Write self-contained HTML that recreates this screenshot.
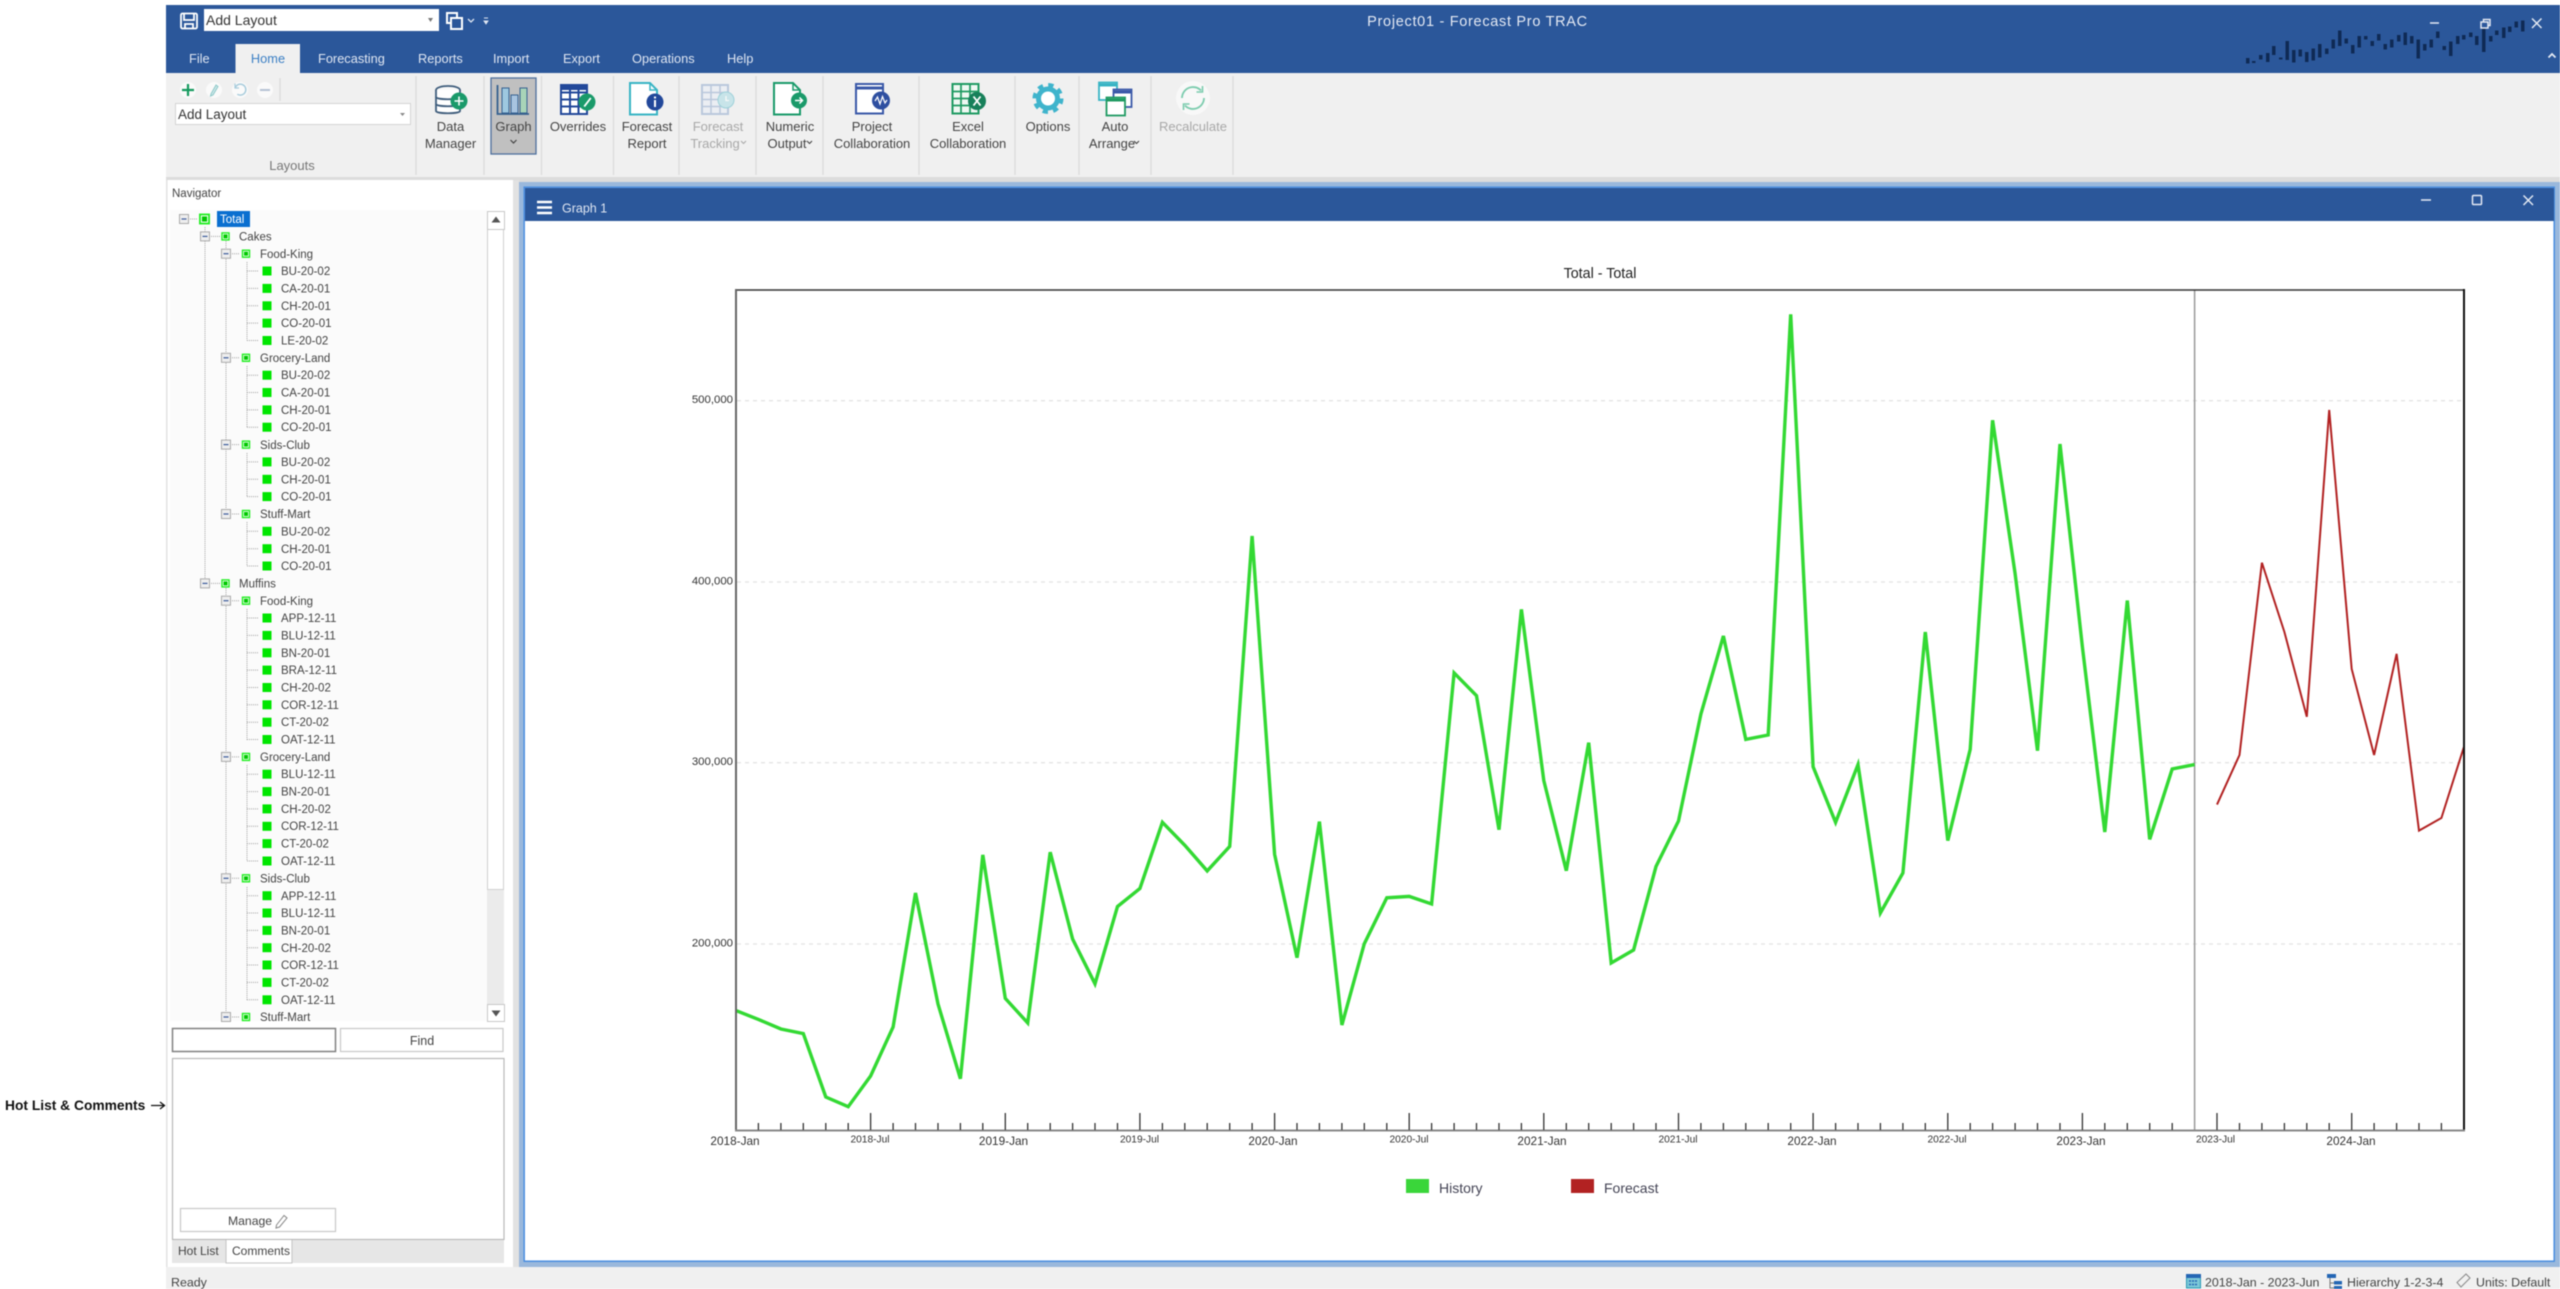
<!DOCTYPE html>
<html><head><meta charset="utf-8"><title>Project01 - Forecast Pro TRAC</title>
<style>
html,body{margin:0;padding:0;background:#fff;width:2560px;height:1289px;overflow:hidden}
svg{display:block;position:absolute;left:0;top:0;filter:blur(.4px)}
text{font-family:"Liberation Sans",sans-serif;fill:#444}
.t{font-size:11.5px;fill:#444}
.r{font-size:13px;fill:#444;text-anchor:middle}
.g{fill:#a8a8a8}
.tab{font-size:12.8px;fill:#dfe6f2}
.yl{font-size:11.4px;fill:#333;text-anchor:end}
.xl{font-size:11.8px;fill:#333;text-anchor:middle}
.xs{font-size:10.2px;fill:#333;text-anchor:middle}
.st{font-size:12.4px;fill:#444}
</style></head><body>
<svg width="2560" height="1289" viewBox="0 0 2560 1289" xmlns="http://www.w3.org/2000/svg">
<defs>
<g id="e"><rect x="-4.5" y="-4.5" width="9" height="9" fill="#eeeeee" stroke="#aaa"/><path d="M-2.5 0H2.5" stroke="#3a5a9a" stroke-width="1.2"/></g>
<g id="n"><rect x="-3.5" y="-3.5" width="7" height="7" fill="#fff" stroke="#22ee22" stroke-width="1.4"/><rect x="-2" y="-2" width="4" height="4" fill="#00c800"/></g>
<rect id="l" x="-4.5" y="-4.5" width="9" height="9" fill="#00e600"/>
</defs>

<!-- App frame -->
<rect x="166" y="5" width="2394" height="68" fill="#2b579a"/>
<rect x="166" y="73" width="2394" height="104" fill="#f0f0f0"/>
<rect x="166" y="177" width="2394" height="5" fill="#dcdcdc"/>
<rect x="166" y="180" width="347" height="1088" fill="#fff"/>
<rect x="166" y="180" width="1.5" height="1088" fill="#e2e2e2"/>
<rect x="513" y="180" width="6" height="1088" fill="#e2e2e2"/>
<rect x="519" y="182" width="2041" height="1085" fill="#9ab8dc"/>
<rect x="524.2" y="187.2" width="2030" height="1074" fill="#fff" stroke="#4a8ee0" stroke-width="1.5"/>
<rect x="525" y="188" width="2029" height="33" fill="#2b579a"/>
<rect x="166" y="1267" width="2394" height="22" fill="#f0f0f0"/>

<!-- Quick access -->
<g fill="none" stroke="#fff" stroke-width="1.8"><rect x="181" y="13.5" width="16" height="15" rx="1.5"/><path d="M184 14V20H194V14M185 28.5V24H193V28.5"/></g>
<rect x="204" y="9" width="235" height="22" fill="#fff"/>
<text x="206" y="25" font-size="14" style="fill:#333">Add Layout</text>
<path d="M428 18l5 0-2.500 4z" fill="#777"/>
<g fill="none" stroke="#fff" stroke-width="2"><rect x="447" y="13" width="10" height="10"/><rect x="451" y="18" width="11" height="11" fill="#2b579a"/></g>
<path d="M468 19l3 3 3-3" fill="none" stroke="#dfe6f2" stroke-width="1.3"/>
<path d="M484 18h4M484 21l2 3 2-3z" fill="#dfe6f2" stroke="#dfe6f2" stroke-width=".9"/>
<text x="1477.500" y="26" font-size="14.500" letter-spacing=".7" text-anchor="middle" style="fill:#e4e9f3">Project01 - Forecast Pro TRAC</text>

<!-- Tabs -->
<text x="189" y="63" class="tab">File</text>
<rect x="235.500" y="44" width="64.500" height="29" fill="#f0f0f0"/>
<text x="268" y="63" font-size="12.800" text-anchor="middle" style="fill:#3b7fc4">Home</text>
<text x="318" y="63" class="tab">Forecasting</text>
<text x="418" y="63" class="tab">Reports</text>
<text x="493" y="63" class="tab">Import</text>
<text x="563" y="63" class="tab">Export</text>
<text x="632" y="63" class="tab">Operations</text>
<text x="727" y="63" class="tab">Help</text>

<!-- Sparkline -->
<g fill="#0f2a55">
<rect x="2246" y="58" width="3.500" height="5.500"/><rect x="2252" y="61" width="3.500" height="2"/><rect x="2259" y="55" width="3.500" height="4.500"/><rect x="2266" y="53" width="3.500" height="9"/><rect x="2272" y="46" width="3.500" height="9"/><rect x="2279" y="57.500" width="3.500" height="2"/><rect x="2285.500" y="41" width="3.500" height="19"/><rect x="2292" y="50" width="3.500" height="12.500"/><rect x="2298.500" y="49.500" width="3.500" height="7"/><rect x="2305" y="52" width="3.500" height="10"/><rect x="2311.500" y="48.500" width="3.500" height="12"/><rect x="2318" y="44" width="3.500" height="13.500"/><rect x="2325" y="48.500" width="3.500" height="5.500"/><rect x="2331.500" y="39.500" width="3.500" height="9"/><rect x="2338" y="30.500" width="3.500" height="15.500"/><rect x="2344.500" y="38.500" width="3.500" height="5"/><rect x="2351" y="45" width="3.500" height="8.500"/><rect x="2357.500" y="36" width="3.500" height="11.500"/><rect x="2364" y="36" width="3.500" height="3.500"/><rect x="2370.500" y="41" width="3.500" height="5"/><rect x="2377" y="34" width="3.500" height="6.500"/><rect x="2383.500" y="44" width="3.500" height="5.500"/><rect x="2390" y="39.500" width="3.500" height="8"/><rect x="2397" y="35" width="3.500" height="6.500"/><rect x="2403.500" y="32.500" width="3.500" height="12.500"/><rect x="2410" y="36" width="3.500" height="7.500"/><rect x="2416.500" y="39.500" width="3.500" height="19"/><rect x="2423" y="44" width="3.500" height="6.500"/><rect x="2429.500" y="39.500" width="3.500" height="8"/><rect x="2436" y="31.500" width="3.500" height="6.500"/><rect x="2442.500" y="46" width="3.500" height="4"/><rect x="2449" y="41.500" width="3.500" height="14.500"/><rect x="2456" y="36" width="3.500" height="8"/><rect x="2462" y="35" width="3.500" height="4.500"/><rect x="2469" y="32.500" width="3.500" height="4.500"/><rect x="2475" y="36" width="3.500" height="9"/><rect x="2482" y="28.500" width="3.500" height="23.500"/><rect x="2489" y="36" width="3.500" height="5.500"/><rect x="2495" y="30.500" width="3.500" height="4.500"/><rect x="2502" y="27.500" width="3.500" height="10.500"/><rect x="2508" y="26.500" width="3.500" height="5.500"/><rect x="2514.500" y="21.500" width="3.500" height="6"/><rect x="2521" y="20.500" width="3.500" height="11"/>
</g>
<!-- Window controls -->
<g fill="none" stroke="#e4e9f3" stroke-width="1.500">
<path d="M2430 23H2439"/><rect x="2481" y="22" width="7" height="6"/><path d="M2483.500 22V19.500H2490V25.500H2488"/><path d="M2532 18.500L2541.500 28M2541.500 18.500L2532 28"/>
<path d="M2548.500 57.500L2552 54L2555.500 57.500" stroke-width="1.800"/>
<path d="M2421 200H2431"/><rect x="2472.500" y="195.500" width="9" height="9" rx="1"/><path d="M2523.500 195.500L2533 205M2533 195.500L2523.500 205"/>
</g>
<!-- Child title -->
<path d="M537 202H552M537 207.500H552M537 213H552" stroke="#fff" stroke-width="2.500"/>
<text x="562" y="212.500" font-size="12.500" style="fill:#dfe6f2">Graph 1</text>

<!-- Ribbon separators -->
<g stroke="#dcdcdc" stroke-width="1.300"><path d="M416 76V175M484 76V175M541.500 76V175M613.500 76V175M679 76V175M756 76V175M823 76V175M919 76V175M1015 76V175M1079 76V175M1151 76V175M1233 76V175M280 78V101"/></g>

<!-- Layouts group -->
<circle cx="188" cy="90" r="8" fill="#fafafa"/><circle cx="214" cy="90" r="8" fill="#fafafa"/><circle cx="240" cy="90" r="8" fill="#fafafa"/><circle cx="265" cy="90" r="8" fill="#fafafa"/>
<path d="M182 90H194M188 84V96" stroke="#159a5e" stroke-width="2.200"/>
<path d="M211 94L216 85L218 86.500L213 95L210.500 96Z" fill="#cfe8ea" stroke="#8cc8c8"/>
<path d="M236 86.500A5.500 5.500 0 1 1 236 93" fill="none" stroke="#a8ccdc" stroke-width="1.500" transform="rotate(-20 240 90)"/><path d="M235 83.500V88H239" fill="none" stroke="#a8ccdc" stroke-width="1.200"/>
<path d="M260 90H270" stroke="#b6c2d4" stroke-width="2"/>
<rect x="175.500" y="103.500" width="235" height="21" fill="#fff" stroke="#d4d4d4"/>
<text x="178" y="119" font-size="13.500" style="fill:#333">Add Layout</text>
<path d="M400 113h5l-2.500 3z" fill="#888"/>
<text x="292" y="170" font-size="13" text-anchor="middle" style="fill:#777">Layouts</text>

<!-- Data Manager -->
<g fill="#f8f8f8" stroke="#3f5d7c" stroke-width="1.800"><ellipse cx="448" cy="90" rx="12" ry="4"/><path d="M436 90V111C436 114 460 114 460 111V90" fill="#fff"/><path d="M436 97C436 100 460 100 460 97M436 104C436 107 460 107 460 104" fill="none"/></g>
<circle cx="459" cy="101" r="8.500" fill="#1a9a6a"/><path d="M454.500 101H463.500M459 96.500V105.500" stroke="#fff" stroke-width="1.500"/>
<text x="450.500" y="131" class="r">Data</text><text x="450.500" y="148" class="r">Manager</text>

<!-- Graph (pressed) -->
<rect x="491" y="78" width="45" height="76" fill="#c0c0c0" stroke="#4f709e" stroke-width="1.300"/>
<path d="M497.500 85V114H529" fill="none" stroke="#35608f" stroke-width="1.800"/>
<rect x="502" y="88" width="7" height="25" fill="#9ec8e0" stroke="#35608f"/><rect x="511" y="95" width="7" height="18" fill="#a8c4e0" stroke="#35608f"/><rect x="520" y="88" width="7" height="25" fill="#a8d4b8" stroke="#35608f"/>
<text x="513.500" y="131" class="r">Graph</text>
<path d="M510.500 140l3 3 3-3" fill="none" stroke="#444" stroke-width="1.200"/>

<!-- Overrides -->
<rect x="561" y="85" width="26" height="29" fill="#fff" stroke="#22489a" stroke-width="2"/>
<path d="M561 92.500H587M561 99.500H587M561 106.500H587M570 85V114M578.500 85V114" stroke="#22489a" stroke-width="2"/><rect x="561" y="85" width="26" height="5" fill="#22489a"/>
<circle cx="587" cy="102" r="8.500" fill="#1a9a6a"/><path d="M583.500 106L590 97.500L591.500 98.500L585 107Z" fill="#fff"/>
<text x="578" y="131" class="r">Overrides</text>

<!-- Forecast Report -->
<path d="M630 83H650L657 90V114.500H630Z" fill="#fff" stroke="#38b4c4" stroke-width="2"/><path d="M650 83V90H657" fill="none" stroke="#38b4c4" stroke-width="1.500"/>
<circle cx="655" cy="102" r="8.500" fill="#22489a"/><path d="M655 100V107M655 96.500V98.500" stroke="#fff" stroke-width="2"/>
<text x="647" y="131" class="r">Forecast</text><text x="647" y="148" class="r">Report</text>

<!-- Forecast Tracking -->
<g opacity=".55"><rect x="702" y="85" width="26" height="29" fill="#e8eef6" stroke="#8fa8cc" stroke-width="2"/><path d="M702 92.500H728M702 99.500H728M702 106.500H728M711 85V114M720 85V114" stroke="#8fa8cc" stroke-width="1.500"/><circle cx="726" cy="100" r="8" fill="#a8dce4" stroke="#5cb8c8"/><path d="M726 96V100.500H729" fill="none" stroke="#fff" stroke-width="1.300"/></g>
<text x="718" y="131" class="r g">Forecast</text><text x="715" y="148" class="r g">Tracking</text><path d="M741 141l2.500 2.500 2.500-2.500" fill="none" stroke="#aaa" stroke-width="1.100"/>

<!-- Numeric Output -->
<path d="M774 83H793L800 90V114.500H774Z" fill="#fff" stroke="#1a9a6a" stroke-width="2"/><path d="M793 83V90H800" fill="none" stroke="#1a9a6a" stroke-width="1.500"/>
<circle cx="799" cy="100.500" r="8" fill="#1a9a6a"/><path d="M795 100.500H802M799.500 97.500L802.500 100.500L799.500 103.500" fill="none" stroke="#fff" stroke-width="1.500"/>
<text x="790" y="131" class="r">Numeric</text><text x="787" y="148" class="r">Output</text><path d="M807 141l2.500 2.500 2.500-2.500" fill="none" stroke="#444" stroke-width="1.100"/>

<!-- Project Collaboration -->
<rect x="856" y="84" width="27" height="29.500" fill="#fff" stroke="#3a58a8" stroke-width="2"/><path d="M856 88H883" stroke="#3a58a8" stroke-width="3"/>
<circle cx="881" cy="100.500" r="9" fill="#2e4fa0"/><path d="M875 101L877.500 97L880 104L882.500 96.500L885 103L887 100" fill="none" stroke="#fff" stroke-width="1.200"/>
<text x="872" y="131" class="r">Project</text><text x="872" y="148" class="r">Collaboration</text>

<!-- Excel -->
<rect x="952.500" y="84" width="26" height="29.500" fill="#eef8f2" stroke="#1f9a62" stroke-width="2"/><path d="M952.500 91.500H978.500M952.500 98.500H978.500M952.500 105.500H978.500M961 84V113.500M970 84V113.500" stroke="#1f9a62" stroke-width="1.700"/>
<circle cx="977" cy="101" r="9" fill="#17805a"/><path d="M973.500 96.500L980.500 105.500M980.500 96.500L973.500 105.500" stroke="#fff" stroke-width="1.800"/>
<text x="968" y="131" class="r">Excel</text><text x="968" y="148" class="r">Collaboration</text>

<!-- Options gear -->
<circle cx="1048" cy="98.500" r="13.500" fill="none" stroke="#3fb4cc" stroke-width="4" stroke-dasharray="5.300 5.300"/>
<circle cx="1048" cy="98.500" r="9.500" fill="#fff" stroke="#3fb4cc" stroke-width="5"/>
<text x="1048" y="131" class="r">Options</text>

<!-- Auto Arrange -->
<rect x="1099" y="82.500" width="18" height="17.500" fill="#fff" stroke="#38b4c4" stroke-width="1.800"/><path d="M1099 85H1117" stroke="#38b4c4" stroke-width="3"/>
<rect x="1113.500" y="89.500" width="18" height="17.500" fill="#fff" stroke="#3a58a8" stroke-width="1.800"/><path d="M1113.500 92H1131.500" stroke="#3a58a8" stroke-width="3"/>
<rect x="1106.500" y="97.500" width="18.500" height="18" fill="#fff" stroke="#1f9a62" stroke-width="1.800"/><path d="M1106.500 100H1125" stroke="#1f9a62" stroke-width="3"/>
<text x="1115" y="131" class="r">Auto</text><text x="1112" y="148" class="r">Arrange</text><path d="M1134 141l2.500 2.500 2.500-2.500" fill="none" stroke="#444" stroke-width="1.100"/>

<!-- Recalculate -->
<circle cx="1193" cy="98" r="17" fill="#f8f8f8"/>
<path d="M1182 98A11 11 0 0 1 1201 90.500M1204 98A11 11 0 0 1 1185 105.500" fill="none" stroke="#7cccae" stroke-width="1.800"/>
<path d="M1202.500 86V92H1196.500M1183.500 110V104H1189.500" fill="none" stroke="#7cccae" stroke-width="1.600"/>
<text x="1193" y="131" class="r g">Recalculate</text>

<!-- Navigator -->
<text x="172" y="197" class="t">Navigator</text>
<rect x="170" y="210" width="317" height="811" fill="#fbfbfb"/>
<g fill="none" stroke="#a4a4a4" stroke-dasharray="1 1">
<path d="M205 227V583M226 241V514M226 588V1021"/>
<path d="M247 262V340.500M247 366V427M247 453V497M247 522V566M247 609V740M247 765V861M247 887V1000"/>
<path d="M188 219H198M209 236.400H220M209 583.400H220M230 253.700H240M230 357.800H240M230 444.600H240M230 514H240M230 600.700H240M230 756.900H240M230 878.300H240M230 1017H240"/>
<path d="M247 271H258M247 288.400H258M247 305.800H258M247 323.100H258M247 340.500H258M247 375.200H258M247 392.500H258M247 409.900H258M247 427.200H258M247 461.900H258M247 479.300H258M247 496.600H258M247 531.300H258M247 548.700H258M247 566H258M247 618H258M247 635.400H258M247 652.800H258M247 670.100H258M247 687.500H258M247 704.800H258M247 722.200H258M247 739.500H258M247 774.200H258M247 791.600H258M247 808.900H258M247 826.300H258M247 843.600H258M247 861H258M247 895.700H258M247 913H258M247 930.400H258M247 947.700H258M247 965H258M247 982.400H258M247 999.800H258"/>
</g>
<!-- expanders -->
<use href="#e" x="184" y="219"/><use href="#e" x="205" y="236.400"/><use href="#e" x="205" y="583.400"/>
<use href="#e" x="226" y="253.700"/><use href="#e" x="226" y="357.800"/><use href="#e" x="226" y="444.600"/><use href="#e" x="226" y="514"/><use href="#e" x="226" y="600.700"/><use href="#e" x="226" y="756.900"/><use href="#e" x="226" y="878.300"/><use href="#e" x="226" y="1017"/>
<!-- node icons -->
<g transform="translate(204.500 219) scale(1.300)"><use href="#n"/></g>
<use href="#n" x="225.500" y="236.400"/><use href="#n" x="225.500" y="583.400"/>
<use href="#n" x="246" y="253.700"/><use href="#n" x="246" y="357.800"/><use href="#n" x="246" y="444.600"/><use href="#n" x="246" y="514"/><use href="#n" x="246" y="600.700"/><use href="#n" x="246" y="756.900"/><use href="#n" x="246" y="878.300"/><use href="#n" x="246" y="1017"/>
<!-- leaf icons -->
<use href="#l" x="267" y="271"/><use href="#l" x="267" y="288.400"/><use href="#l" x="267" y="305.800"/><use href="#l" x="267" y="323.100"/><use href="#l" x="267" y="340.500"/><use href="#l" x="267" y="375.200"/><use href="#l" x="267" y="392.500"/><use href="#l" x="267" y="409.900"/><use href="#l" x="267" y="427.200"/><use href="#l" x="267" y="461.900"/><use href="#l" x="267" y="479.300"/><use href="#l" x="267" y="496.600"/><use href="#l" x="267" y="531.300"/><use href="#l" x="267" y="548.700"/><use href="#l" x="267" y="566"/><use href="#l" x="267" y="618"/><use href="#l" x="267" y="635.400"/><use href="#l" x="267" y="652.800"/><use href="#l" x="267" y="670.100"/><use href="#l" x="267" y="687.500"/><use href="#l" x="267" y="704.800"/><use href="#l" x="267" y="722.200"/><use href="#l" x="267" y="739.500"/><use href="#l" x="267" y="774.200"/><use href="#l" x="267" y="791.600"/><use href="#l" x="267" y="808.900"/><use href="#l" x="267" y="826.300"/><use href="#l" x="267" y="843.600"/><use href="#l" x="267" y="861"/><use href="#l" x="267" y="895.700"/><use href="#l" x="267" y="913"/><use href="#l" x="267" y="930.400"/><use href="#l" x="267" y="947.700"/><use href="#l" x="267" y="965"/><use href="#l" x="267" y="982.400"/><use href="#l" x="267" y="999.800"/>
<!-- labels -->
<rect x="217" y="211" width="33" height="16" fill="#0a6fd0"/>
<text x="220" y="223" class="t" style="fill:#fff">Total</text>
<text x="239" y="240.500" class="t">Cakes</text><text x="239" y="587.500" class="t">Muffins</text>
<text x="260" y="258" class="t">Food-King</text><text x="260" y="362" class="t">Grocery-Land</text><text x="260" y="449" class="t">Sids-Club</text><text x="260" y="518" class="t">Stuff-Mart</text><text x="260" y="605" class="t">Food-King</text><text x="260" y="761" class="t">Grocery-Land</text><text x="260" y="882.500" class="t">Sids-Club</text><text x="260" y="1021" class="t">Stuff-Mart</text>
<g class="t">
<text x="281" y="275" class="t">BU-20-02</text><text x="281" y="292.500" class="t">CA-20-01</text><text x="281" y="310" class="t">CH-20-01</text><text x="281" y="327" class="t">CO-20-01</text><text x="281" y="344.500" class="t">LE-20-02</text>
<text x="281" y="379" class="t">BU-20-02</text><text x="281" y="396.500" class="t">CA-20-01</text><text x="281" y="414" class="t">CH-20-01</text><text x="281" y="431" class="t">CO-20-01</text>
<text x="281" y="466" class="t">BU-20-02</text><text x="281" y="483.500" class="t">CH-20-01</text><text x="281" y="500.500" class="t">CO-20-01</text>
<text x="281" y="535.500" class="t">BU-20-02</text><text x="281" y="553" class="t">CH-20-01</text><text x="281" y="570" class="t">CO-20-01</text>
<text x="281" y="622" class="t">APP-12-11</text><text x="281" y="639.500" class="t">BLU-12-11</text><text x="281" y="657" class="t">BN-20-01</text><text x="281" y="674" class="t">BRA-12-11</text><text x="281" y="691.500" class="t">CH-20-02</text><text x="281" y="709" class="t">COR-12-11</text><text x="281" y="726" class="t">CT-20-02</text><text x="281" y="743.500" class="t">OAT-12-11</text>
<text x="281" y="778" class="t">BLU-12-11</text><text x="281" y="795.500" class="t">BN-20-01</text><text x="281" y="813" class="t">CH-20-02</text><text x="281" y="830" class="t">COR-12-11</text><text x="281" y="847.500" class="t">CT-20-02</text><text x="281" y="865" class="t">OAT-12-11</text>
<text x="281" y="900" class="t">APP-12-11</text><text x="281" y="917" class="t">BLU-12-11</text><text x="281" y="934.500" class="t">BN-20-01</text><text x="281" y="952" class="t">CH-20-02</text><text x="281" y="969" class="t">COR-12-11</text><text x="281" y="986.500" class="t">CT-20-02</text><text x="281" y="1004" class="t">OAT-12-11</text>
</g>
<!-- Scrollbar -->
<rect x="487" y="211" width="17" height="810" fill="#ebebeb"/>
<rect x="487.500" y="229.500" width="16" height="660" fill="#fff" stroke="#d0d0d0"/>
<rect x="487.500" y="211.500" width="17" height="18" fill="#fff" stroke="#c8c8c8"/>
<rect x="487.500" y="1004.500" width="17" height="17" fill="#fff" stroke="#c8c8c8"/>
<path d="M491.500 222.500L496 216.500L500.500 222.500Z" fill="#555"/><path d="M491.500 1010.500L496 1016.500L500.500 1010.500Z" fill="#555"/>

<!-- Find -->
<rect x="172.500" y="1028.500" width="163" height="23" fill="#fff" stroke="#808080" stroke-width="1.500"/>
<rect x="340.500" y="1028.500" width="162.500" height="23" fill="#fff" stroke="#c8c8c8" stroke-width="1.200"/>
<text x="422" y="1045" font-size="12.500" text-anchor="middle" style="fill:#444">Find</text>
<!-- Comments -->
<rect x="172.500" y="1058.500" width="331.500" height="181" fill="#fff" stroke="#b8b8b8" stroke-width="1.200"/>
<rect x="180.500" y="1208.500" width="155" height="23" fill="#fff" stroke="#c8c8c8" stroke-width="1.200"/>
<text x="228" y="1225" font-size="12.200" style="fill:#444">Manage</text>
<path d="M276.500 1225L284 1215.500L287 1218L279.500 1227L276 1228Z" fill="none" stroke="#888"/>
<rect x="172" y="1240" width="332" height="23" fill="#e6e6e6"/>
<rect x="226" y="1240" width="66" height="23" fill="#fff"/><path d="M226 1240V1263H292V1240" fill="none" stroke="#c4c4c4"/>
<text x="178" y="1255" font-size="12" style="fill:#444">Hot List</text>
<text x="232" y="1255" font-size="12" style="fill:#444">Comments</text>

<!-- Side note -->
<text x="5" y="1110" font-size="13.800" font-weight="bold" style="fill:#111">Hot List &amp; Comments</text>
<path d="M151 1105.500H164M160 1102L164.500 1105.500L160 1109" fill="none" stroke="#111" stroke-width="1.300"/>

<!-- Chart -->
<text x="1600" y="278" font-size="14.300" text-anchor="middle" style="fill:#222">Total - Total</text>
<g stroke="#e4e4e4" stroke-width="1.300" stroke-dasharray="4 4"><path d="M737 400.700H2464M737 582H2464M737 762.700H2464M737 944H2464"/></g>
<path d="M2194.600 290V1130" stroke="#999" stroke-width="1.500"/>
<polyline fill="none" stroke="#33d933" stroke-width="3.400" stroke-linejoin="miter" points="736,1010.600 758.400,1019.400 780.900,1029 803.300,1033.600 825.800,1097 848.200,1106.700 870.600,1076 893.100,1027 915.500,893 938,1004 960.400,1078.700 982.800,854.900 1005.300,998.400 1027.700,1022.900 1050.200,852.200 1072.600,939 1095,983.800 1117.500,906.500 1139.900,888.500 1162.400,822.300 1184.800,845.300 1207.200,870.900 1229.700,846.400 1252.100,536 1274.600,854.300 1297,957.700 1319.400,821.600 1341.900,1025 1364.300,943.700 1386.800,897.800 1409.200,896.400 1431.600,904 1454.100,672.900 1476.500,695.700 1499,829.700 1521.400,609.400 1543.800,780.600 1566.300,870.700 1588.700,742.700 1611.200,963 1633.600,950 1656,866.500 1678.500,821 1700.900,714 1723.400,636 1745.800,739.400 1768.200,735 1790.700,314.300 1813.100,766.800 1835.600,822.400 1858,764.600 1880.400,913 1902.900,873 1925.300,632 1947.800,840.600 1970.200,749.400 1992.600,420.300 2015.100,573.600 2037.500,750.700 2060,444 2082.400,647 2104.800,832 2127.300,600.500 2149.700,839.300 2172.200,769 2194.600,764.600"/>
<polyline fill="none" stroke="#b22222" stroke-width="2" points="2217,804.600 2239.500,755 2261.900,562.700 2284.400,632 2306.800,716.800 2329.200,409.900 2351.700,669 2374.100,755 2396.600,653.900 2419,830.600 2441.400,818 2463.900,747"/>
<path d="M736 290H2464" stroke="#333" stroke-width="1.600"/>
<path d="M736 289V1131" stroke="#666" stroke-width="2"/>
<path d="M2464 289V1131" stroke="#111" stroke-width="2"/>
<path d="M735 1130.500H2465" stroke="#888" stroke-width="2"/>
<path stroke="#333" stroke-width="1.300" d="M758.400 1130V1123M780.900 1130V1123M803.300 1130V1123M825.800 1130V1123M848.200 1130V1123M893.100 1130V1123M915.500 1130V1123M938 1130V1123M960.400 1130V1123M982.800 1130V1123M1027.700 1130V1123M1050.200 1130V1123M1072.600 1130V1123M1095 1130V1123M1117.500 1130V1123M1162.400 1130V1123M1184.800 1130V1123M1207.200 1130V1123M1229.700 1130V1123M1252.100 1130V1123M1297 1130V1123M1319.400 1130V1123M1341.900 1130V1123M1364.300 1130V1123M1386.800 1130V1123M1431.600 1130V1123M1454.100 1130V1123M1476.500 1130V1123M1499 1130V1123M1521.400 1130V1123M1566.300 1130V1123M1588.700 1130V1123M1611.200 1130V1123M1633.600 1130V1123M1656 1130V1123M1700.900 1130V1123M1723.400 1130V1123M1745.800 1130V1123M1768.200 1130V1123M1790.700 1130V1123M1835.600 1130V1123M1858 1130V1123M1880.400 1130V1123M1902.900 1130V1123M1925.300 1130V1123M1970.200 1130V1123M1992.600 1130V1123M2015.100 1130V1123M2037.500 1130V1123M2060 1130V1123M2104.800 1130V1123M2127.300 1130V1123M2149.700 1130V1123M2172.200 1130V1123M2239.500 1130V1123M2261.900 1130V1123M2284.400 1130V1123M2306.800 1130V1123M2329.200 1130V1123M2374.100 1130V1123M2396.600 1130V1123M2419 1130V1123M2441.400 1130V1123M870.600 1130V1113M1005.300 1130V1113M1139.900 1130V1113M1274.600 1130V1113M1409.200 1130V1113M1543.800 1130V1113M1678.500 1130V1113M1813.100 1130V1113M1947.800 1130V1113M2082.400 1130V1113M2217 1130V1113M2351.700 1130V1113"/>
<text x="733" y="403" class="yl">500,000</text><text x="733" y="584.500" class="yl">400,000</text><text x="733" y="765" class="yl">300,000</text><text x="733" y="946.500" class="yl">200,000</text>
<text x="735" y="1145" class="xl">2018-Jan</text><text x="870" y="1142.500" class="xs">2018-Jul</text>
<text x="1003.500" y="1145" class="xl">2019-Jan</text><text x="1139.500" y="1142.500" class="xs">2019-Jul</text>
<text x="1273" y="1145" class="xl">2020-Jan</text><text x="1409" y="1142.500" class="xs">2020-Jul</text>
<text x="1542" y="1145" class="xl">2021-Jan</text><text x="1678" y="1142.500" class="xs">2021-Jul</text>
<text x="1812" y="1145" class="xl">2022-Jan</text><text x="1947" y="1142.500" class="xs">2022-Jul</text>
<text x="2081" y="1145" class="xl">2023-Jan</text><text x="2215.500" y="1142.500" class="xs">2023-Jul</text>
<text x="2351" y="1145" class="xl">2024-Jan</text>
<!-- Legend -->
<rect x="1406" y="1179" width="23" height="14" fill="#3ad63a"/>
<text x="1439" y="1193" font-size="14" style="fill:#445">History</text>
<rect x="1571" y="1179" width="23" height="14" fill="#b22222"/>
<text x="1604" y="1193" font-size="14" style="fill:#445">Forecast</text>

<!-- Status -->
<text x="171" y="1286.500" class="st">Ready</text>
<rect x="2186.500" y="1276" width="14" height="12" fill="#7cc8d8" stroke="#2a9ab4"/><rect x="2186" y="1274" width="15" height="4" fill="#2466b4"/><path d="M2189 1281H2198M2189 1284.500H2198" stroke="#2466b4" stroke-width="1.500" stroke-dasharray="2 1"/>
<text x="2205" y="1286.500" class="st">2018-Jan - 2023-Jun</text>
<rect x="2327" y="1274" width="9" height="4" fill="#2466b4"/><rect x="2334" y="1281" width="8" height="3.500" fill="#2466b4"/><rect x="2334" y="1286" width="8" height="3" fill="#2466b4"/><path d="M2330 1278V1288H2334M2330 1283H2334" fill="none" stroke="#777"/>
<text x="2347" y="1286.500" class="st">Hierarchy 1-2-3-4</text>
<path d="M2457 1282.500L2466 1274L2470 1278L2461 1287Z" fill="none" stroke="#888"/>
<text x="2476" y="1286.500" class="st">Units: Default</text>
</svg>
</body></html>
